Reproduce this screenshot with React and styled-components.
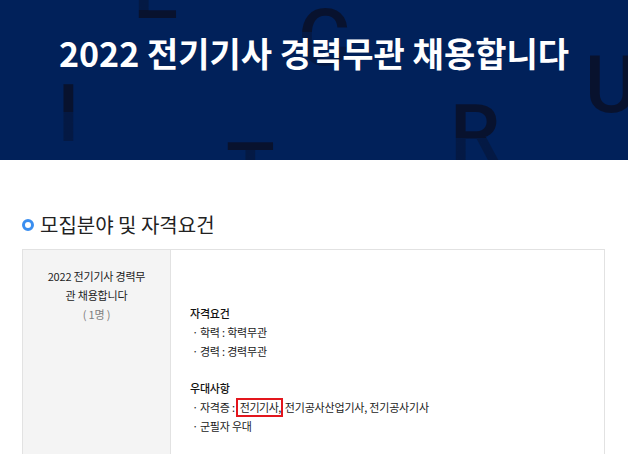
import React from "react";
import styled, { createGlobalStyle } from "styled-components";

const GlobalStyles = createGlobalStyle`
  body {
    margin: 0;
    background: #fff;
    font-family: "Noto Sans CJK KR", "Noto Sans", sans-serif;
    color: #333;
  }
`;

const INK = "#08122e";
const HALF = "rgba(8, 18, 46, 0.5)";

const letters = [
  { ch: "E", top: -49, left: 133, fade: `linear-gradient(to bottom, ${HALF} 0 59px, ${INK} 59px)` },
  { ch: "I", top: 74, left: 57, fade: `linear-gradient(to bottom, ${INK} 0 38px, ${HALF} 38px)` },
  { ch: "C", top: -2, left: 298, fade: `linear-gradient(to bottom, ${INK} 0 34px, ${HALF} 34px)` },
  { ch: "T", top: 132, left: 226, fade: `linear-gradient(to bottom, ${INK} 0 18px, ${HALF} 18px)` },
  { ch: "R", top: 94, left: 450, fade: `linear-gradient(to bottom, ${INK} 0 44px, ${HALF} 44px)` },
  { ch: "U", top: 45, left: 585, fade: `linear-gradient(to bottom, ${INK}, ${INK})` },
];

function App() {
  return (
    <>
      <GlobalStyles />
      <Banner>
        {letters.map((l) => (
          <BgLetter key={l.ch} $top={l.top} $left={l.left} $fade={l.fade}>
            {l.ch}
          </BgLetter>
        ))}
        <Title>2022 전기기사 경력무관 채용합니다</Title>
      </Banner>

      <Section>
        <Heading>
          <Ring />
          모집분야 및 자격요건
        </Heading>

        <Table>
          <JobCell>
            2022 전기기사 경력무
            <br />관 채용합니다
            <Count>( 1명 )</Count>
          </JobCell>
          <DetailCell>
            <Group>
              <GroupTitle>자격요건</GroupTitle>
              <Item>학력 : 학력무관</Item>
              <Item>경력 : 경력무관</Item>
            </Group>
            <Group>
              <GroupTitle>우대사항</GroupTitle>
              <Item>
                자격증 :<Mark>전기기사,</Mark>전기공사산업기사, 전기공사기사
              </Item>
              <Item>군필자 우대</Item>
            </Group>
          </DetailCell>
        </Table>
      </Section>
    </>
  );
}

const Banner = styled.header`
  position: relative;
  height: 160px;
  box-sizing: border-box;
  padding-top: 33px;
  background: #01215a;
  overflow: hidden;
  display: flex;
  justify-content: center;
  align-items: flex-start;
`;

const BgLetter = styled.span`
  position: absolute;
  top: ${(p) => p.$top}px;
  left: ${(p) => p.$left}px;
  font-family: Roboto, "Liberation Sans", sans-serif;
  font-size: 80px;
  line-height: 80px;
  font-weight: 500;
  color: transparent;
  background: ${(p) => p.$fade};
  -webkit-background-clip: text;
  background-clip: text;
`;

const Title = styled.h1`
  position: relative;
  margin: 0;
  font-size: 34px;
  line-height: 40px;
  font-weight: 700;
  color: #fff;
  white-space: nowrap;
`;

const Section = styled.section`
  padding: 51px 23px 40px 22px;
`;

const Heading = styled.h2`
  display: flex;
  align-items: center;
  gap: 6px;
  margin: 0 0 10px;
  font-size: 20px;
  line-height: 28px;
  font-weight: 400;
  color: #222;
`;

const Ring = styled.span`
  width: 12px;
  height: 12px;
  box-sizing: border-box;
  border: 3px solid #3a8ef0;
  border-radius: 50%;
  flex: none;
`;

const Table = styled.div`
  display: grid;
  grid-template-columns: 148px 1fr;
  border: 1px solid #e2e2e2;
  font-size: 11px;
  line-height: 19px;
  letter-spacing: -0.2px;
`;

const JobCell = styled.div`
  background: #f4f4f4;
  border-right: 1px solid #e2e2e2;
  padding: 17px 10px 40px;
  text-align: center;
  color: #222;
`;

const Count = styled.div`
  color: #808080;
`;

const DetailCell = styled.div`
  padding: 54px 19px 30px;
  color: #222;
`;

const Group = styled.div`
  & + & {
    margin-top: 18px;
  }
`;

const GroupTitle = styled.div`
  font-weight: 500;
  color: #111;
`;

const Item = styled.div`
  &::before {
    content: "ㆍ";
  }
`;

const Mark = styled.span`
  display: inline-block;
  margin: 0 2px 0 1px;
  padding: 0 0 0 2px;
  line-height: 15px;
  letter-spacing: -0.5px;
  border: 2px solid #e3161d;
`;

export default App;
